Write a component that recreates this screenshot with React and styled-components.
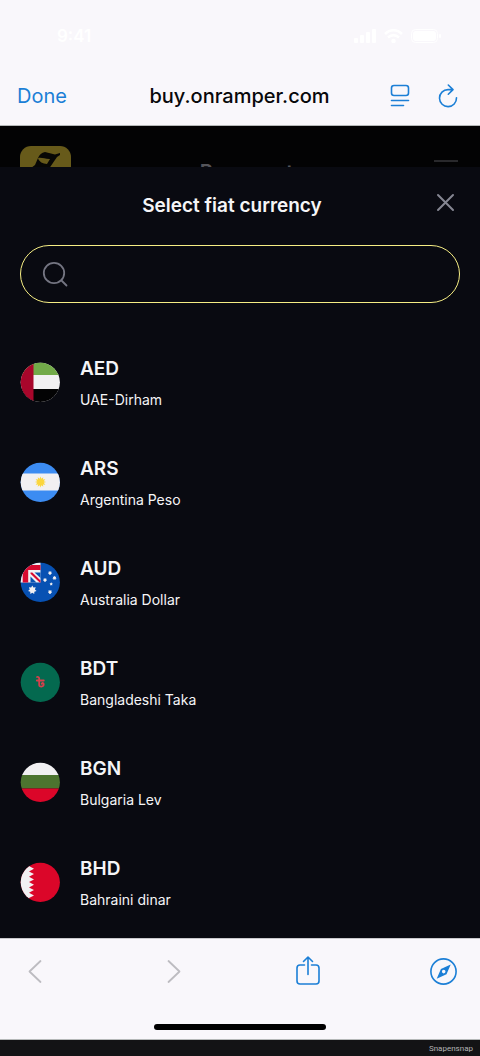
import React, { useState } from 'react'
import styled, { createGlobalStyle } from 'styled-components'

const GlobalStyle = createGlobalStyle`
  *, *::before, *::after {
    box-sizing: border-box;
  }
  body {
    margin: 0;
    background: #131315;
    font-family: Inter, 'Noto Sans', sans-serif;
  }
  button {
    padding: 0;
    border: 0;
    background: none;
    color: inherit;
    font: inherit;
    cursor: pointer;
  }
`

const Screen = styled.div`
  display: flex;
  flex-direction: column;
  min-height: 100vh;
`

const BrowserHeader = styled.header`
  background: #f9f7fb;
  border-bottom: 1px solid #b5b8b8;
`

const StatusBar = styled.div`
  display: flex;
  align-items: center;
  justify-content: space-between;
  height: 72px;
  padding: 0 39px 0 57px;
  color: #ffffff;
  font-size: 17px;
  font-weight: 600;
`

const StatusIcons = styled.div`
  display: flex;
  align-items: center;
  gap: 8px;
`

const AddressBar = styled.div`
  display: grid;
  grid-template-columns: 1fr auto 1fr;
  align-items: center;
  height: 53px;
  padding: 0 18px 6px 17px;
  font-size: 20px;
  line-height: 28px;
`

const DoneButton = styled.button`
  justify-self: start;
  color: #1c7fd6;
`

const Address = styled.div`
  color: #08080a;
  font-weight: 500;
`

const AddressActions = styled.div`
  display: flex;
  justify-content: flex-end;
  gap: 20px;
`

const IconButton = styled.button`
  display: flex;
  flex: none;
  color: ${({ $color }) => $color || '#1c7fd6'};

  &:disabled {
    cursor: default;
  }
`

const PageBehind = styled.div`
  display: flex;
  align-items: flex-start;
  justify-content: space-between;
  height: 41px;
  padding: 20px 22px 0 20px;
  overflow: hidden;
  background: #030304;
  color: #55555a;
`

const PageTitle = styled.div`
  padding-top: 12px;
  font-size: 20px;
  font-weight: 600;
  line-height: 28px;
`

const Sheet = styled.main`
  flex: 1;
  padding: 20px 20px 6px;
  background: #090a11;
  color: #f5f5f7;
`

const SheetHeader = styled.div`
  display: grid;
  grid-template-columns: 16px 1fr 32px;
  align-items: start;
`

const SheetTitle = styled.h1`
  grid-column: 2;
  margin: 0;
  padding-top: 5px;
  font-size: 19px;
  font-weight: 600;
  line-height: 28px;
  text-align: center;
`

const SearchField = styled.label`
  display: flex;
  align-items: center;
  gap: 12px;
  height: 58px;
  margin-top: 25px;
  padding: 0 20px;
  border: 1px solid #f6ee84;
  border-radius: 29px;
  color: #747582;

  input {
    flex: 1;
    min-width: 0;
    border: 0;
    outline: 0;
    background: none;
    color: #f5f5f7;
    font: inherit;
    font-size: 16px;
  }
`

const CurrencyList = styled.ul`
  margin: 29px 0 0;
  padding: 0;
  list-style: none;
`

const CurrencyButton = styled.button`
  display: flex;
  align-items: center;
  gap: 20px;
  width: 100%;
  height: 100px;
  text-align: left;
`

const CurrencyText = styled.span`
  display: flex;
  flex-direction: column;
  gap: 7px;
`

const Code = styled.span`
  font-size: 19px;
  font-weight: 600;
  line-height: 28px;
`

const Name = styled.span`
  font-size: 14px;
  line-height: 20px;
`

const BrowserFooter = styled.footer`
  display: flex;
  flex-direction: column;
  align-items: center;
  border-top: 1px solid #c9c9cc;
  border-bottom: 1px solid #b5b8b8;
  background: #f9f7fb;
`

const Toolbar = styled.nav`
  display: flex;
  justify-content: space-between;
  width: 100%;
  padding: 16px 21px 0 22px;
`

const HomeIndicator = styled.div`
  width: 36%;
  height: 6px;
  margin: 37px 0 9px;
  border-radius: 3px;
  background: #000000;
`

const Watermark = styled.div`
  height: 16px;
  padding-right: 7px;
  color: #b4b4b6;
  font-family: Roboto, sans-serif;
  font-size: 8px;
  line-height: 18px;
  text-align: right;
`

const Icon = ({ size = 32, width = 2, children }) => (
  <svg
    width={size}
    height={size}
    viewBox={`0 0 ${size} ${size}`}
    fill='none'
    stroke='currentColor'
    strokeWidth={width}
    strokeLinecap='round'
    strokeLinejoin='round'
    aria-hidden='true'
  >
    {children}
  </svg>
)

const Star = ({ x, y, r, points = 7 }) => {
  const coords = Array.from({ length: points * 2 }, (_, i) => {
    const radius = i % 2 ? r * 0.6 : r
    const angle = (Math.PI * i) / points - Math.PI / 2
    return `${x + radius * Math.cos(angle)},${y + radius * Math.sin(angle)}`
  })
  return <polygon points={coords.join(' ')} />
}

const flags = {
  AED: (
    <>
      <path fill='#f1f0f2' d='M0 0h40v40H0z' />
      <path fill='#72aa49' d='M0 0h40v13H0z' />
      <path fill='#030304' d='M0 27h40v13H0z' />
      <path fill='#a8062b' d='M0 0h13.5v40H0z' />
    </>
  ),
  ARS: (
    <>
      <path fill='#3c8cf2' d='M0 0h40v40H0z' />
      <path fill='#f1f0f2' d='M0 11.5h40v17H0z' />
      <g fill='#fbd63d'><Star x={20.5} y={20} r={5.6} points={12} /></g>
    </>
  ),
  AUD: (
    <>
      <path fill='#0751b3' d='M0 0h40v40H0z' />
      <path fill='#f1f0f2' d='M0 0h20.5v20.5H0z' />
      <path fill='#d80a30' d='M2.700 3h17.800v5H8.200v12.500H2.700z' />
      <path fill='#0751b3' d='M14.500 10.500h6v5.500zM10.500 14.500l6 6h-6z' />
      <path fill='#d80a30' d='M10.500 10.500h1.800l8.200 8v2h-.8L10.500 11.800z' />
      <g fill='#f1f0f2'>
        <Star x={12.3} y={28} r={4.4} />
        <Star x={30} y={11} r={2.2} />
        <Star x={34.5} y={16} r={2.2} />
        <Star x={25} y={18} r={2.2} />
        <Star x={31.2} y={22} r={1.7} points={5} />
        <Star x={30} y={30} r={2.3} />
      </g>
    </>
  ),
  BDT: (
    <>
      <path fill='#04694f' d='M0 0h40v40H0z' />
      <path
        fill='none'
        stroke='#d6404c'
        strokeWidth='1.8'
        strokeLinecap='round'
        d='M17 15c1.300-.4 2.200.3 2.200 1.600v6.300c0 2.400 4.500 2.200 4.500-.6 0-1.600-1.900-1.700-1.900-.5M16.800 18.500h7'
      />
    </>
  ),
  BGN: (
    <>
      <path fill='#f1f0f2' d='M0 0h40v13H0z' />
      <path fill='#4c742f' d='M0 13h40v13.5H0z' />
      <path fill='#db0629' d='M0 26.5h40V40H0z' />
    </>
  ),
  BHD: (
    <>
      <path fill='#db0629' d='M0 0h40v40H0z' />
      <path fill='#f1f0f2' d='M0 0h9v4l5 2.700L9 9.500l5 2.600L9 14.700l5 2.700L9 20l5 2.700L9 25.400l5 2.700L9 30.700l5 2.700L9 36v4H0z' />
    </>
  ),
}

const Flag = ({ code }) => (
  <svg width='40' height='40' viewBox='0 0 40 40' aria-hidden='true'>
    <clipPath id={`flag-${code}`}><circle cx='20.3' cy='20.3' r='19.6' /></clipPath>
    <g clipPath={`url(#flag-${code})`}>{flags[code]}</g>
  </svg>
)

const currencies = [
  { code: 'AED', name: 'UAE-Dirham' },
  { code: 'ARS', name: 'Argentina Peso' },
  { code: 'AUD', name: 'Australia Dollar' },
  { code: 'BDT', name: 'Bangladeshi Taka' },
  { code: 'BGN', name: 'Bulgaria Lev' },
  { code: 'BHD', name: 'Bahraini dinar' },
]

const CurrencyItem = ({ code, name }) => (
  <li>
    <CurrencyButton type='button'>
      <Flag code={code} />
      <CurrencyText>
        <Code>{code}</Code>
        <Name>{name}</Name>
      </CurrencyText>
    </CurrencyButton>
  </li>
)

const SystemStatus = () => (
  <StatusBar>
    <span>9:41</span>
    <StatusIcons>
      <svg width='22' height='14' fill='currentColor' aria-hidden='true'>
        <rect y='9' width='4' height='5' rx='1' />
        <rect x='6' y='6' width='4' height='8' rx='1' />
        <rect x='12' y='3' width='4' height='11' rx='1' />
        <rect x='18' width='4' height='14' rx='1' />
      </svg>
      <svg width='19' height='14' fill='none' stroke='currentColor' strokeWidth='2.5' aria-hidden='true'>
        <path d='M1 5c5-5 12-5 17 0M4 8.5c3.5-3 7.500-3 11 0' />
        <circle cx='9.5' cy='12' r='1' fill='currentColor' />
      </svg>
      <svg width='30' height='14' fill='currentColor' aria-hidden='true'>
        <rect x='.5' y='.5' width='26' height='13' rx='4' fill='none' stroke='currentColor' />
        <rect x='2' y='2' width='23' height='10' rx='3' />
        <rect x='28' y='5' width='2' height='4' rx='1' />
      </svg>
    </StatusIcons>
  </StatusBar>
)

const App = () => {
  const [query, setQuery] = useState('')
  const term = query.trim().toLowerCase()
  const visible = currencies.filter(({ code, name }) => `${code} ${name}`.toLowerCase().includes(term))

  return (
    <Screen>
      <GlobalStyle />
      <BrowserHeader>
        <SystemStatus />
        <AddressBar>
          <DoneButton type='button'>Done</DoneButton>
          <Address>buy.onramper.com</Address>
          <AddressActions>
            <IconButton type='button' aria-label='Page settings'>
              <Icon size={28} width={1.6}>
                <rect x='5.500' y='3.5' width='17' height='10' rx='2.5' />
                <path d='M5.500 18.500h17M5.500 23.500h12' />
              </Icon>
            </IconButton>
            <IconButton type='button' aria-label='Reload'>
              <Icon size={28} width={1.6}>
                <path d='M18.500 7.600h-4.500a8.500 8.500 0 1 0 8.500 8.200M14.300 3l4.700 4.600-4.700 4.600' />
              </Icon>
            </IconButton>
          </AddressActions>
        </AddressBar>
      </BrowserHeader>

      <PageBehind aria-hidden='true'>
        <svg width='51' height='51' viewBox='0 0 51 51'>
          <rect width='51' height='51' rx='11' fill='#675a1a' />
          <path fill='#070705' d='M11 22l4-3 3-7q2-5 7-6l10 2.500 5-1.500v2l-3 2-7.500 11z' />
          <path fill='#675a1a' d='M18 12c4-.8 7 1.200 12 1l-3 5c-4-.2-8-2-9-6z' />
        </svg>
        <PageTitle>Buy crypto</PageTitle>
        <svg width='24' height='36' stroke='#29292c' strokeWidth='2'>
          <path d='M0 15h24M0 24h24' />
        </svg>
      </PageBehind>

      <Sheet>
        <SheetHeader>
          <SheetTitle>Select fiat currency</SheetTitle>
          <IconButton type='button' aria-label='Close' $color='#858692'>
            <Icon><path d='M10 8l15 15M25 8L10 23' /></Icon>
          </IconButton>
        </SheetHeader>
        <SearchField>
          <Icon size={28} width={1.8}>
            <circle cx='13' cy='13' r='10.2' />
            <path d='M20.500 20.500l5 5' />
          </Icon>
          <input
            type='text'
            aria-label='Search currency'
            value={query}
            onChange={(e) => setQuery(e.target.value)}
          />
        </SearchField>
        <CurrencyList>
          {visible.map((currency) => <CurrencyItem key={currency.code} {...currency} />)}
        </CurrencyList>
      </Sheet>

      <BrowserFooter>
        <Toolbar aria-label='Browser'>
          <IconButton type='button' aria-label='Back' $color='#bdbcc1' disabled>
            <Icon width={1.8}><path d='M18.500 6L7.500 16.500l11 10.500' /></Icon>
          </IconButton>
          <IconButton type='button' aria-label='Forward' $color='#bdbcc1' disabled>
            <Icon width={1.8}><path d='M11.500 6l11 10.500-11 10.500' /></Icon>
          </IconButton>
          <IconButton type='button' aria-label='Share'>
            <Icon width={1.6}>
              <path d='M12.500 10H8a3 3 0 0 0-3 3v13a3 3 0 0 0 3 3h16a3 3 0 0 0 3-3V13a3 3 0 0 0-3-3h-4.500' />
              <path d='M16 19.500V2M11.500 6.500L16 2l4.500 4.500' />
            </Icon>
          </IconButton>
          <IconButton type='button' aria-label='Open in browser'>
            <Icon width={1.6}>
              <circle cx='16.500' cy='16.500' r='12.600' />
              <path
                fill='currentColor'
                stroke='none'
                fillRule='evenodd'
                d='M23.700 9.500l-4.200 9.700-9.800 4.500 4.200-9.800zM16.700 14.800a1.800 1.800 0 1 0 0 3.600 1.800 1.800 0 0 0 0-3.600z'
              />
            </Icon>
          </IconButton>
        </Toolbar>
        <HomeIndicator />
      </BrowserFooter>
      <Watermark>Snapensnap</Watermark>
    </Screen>
  )
}

export default App
